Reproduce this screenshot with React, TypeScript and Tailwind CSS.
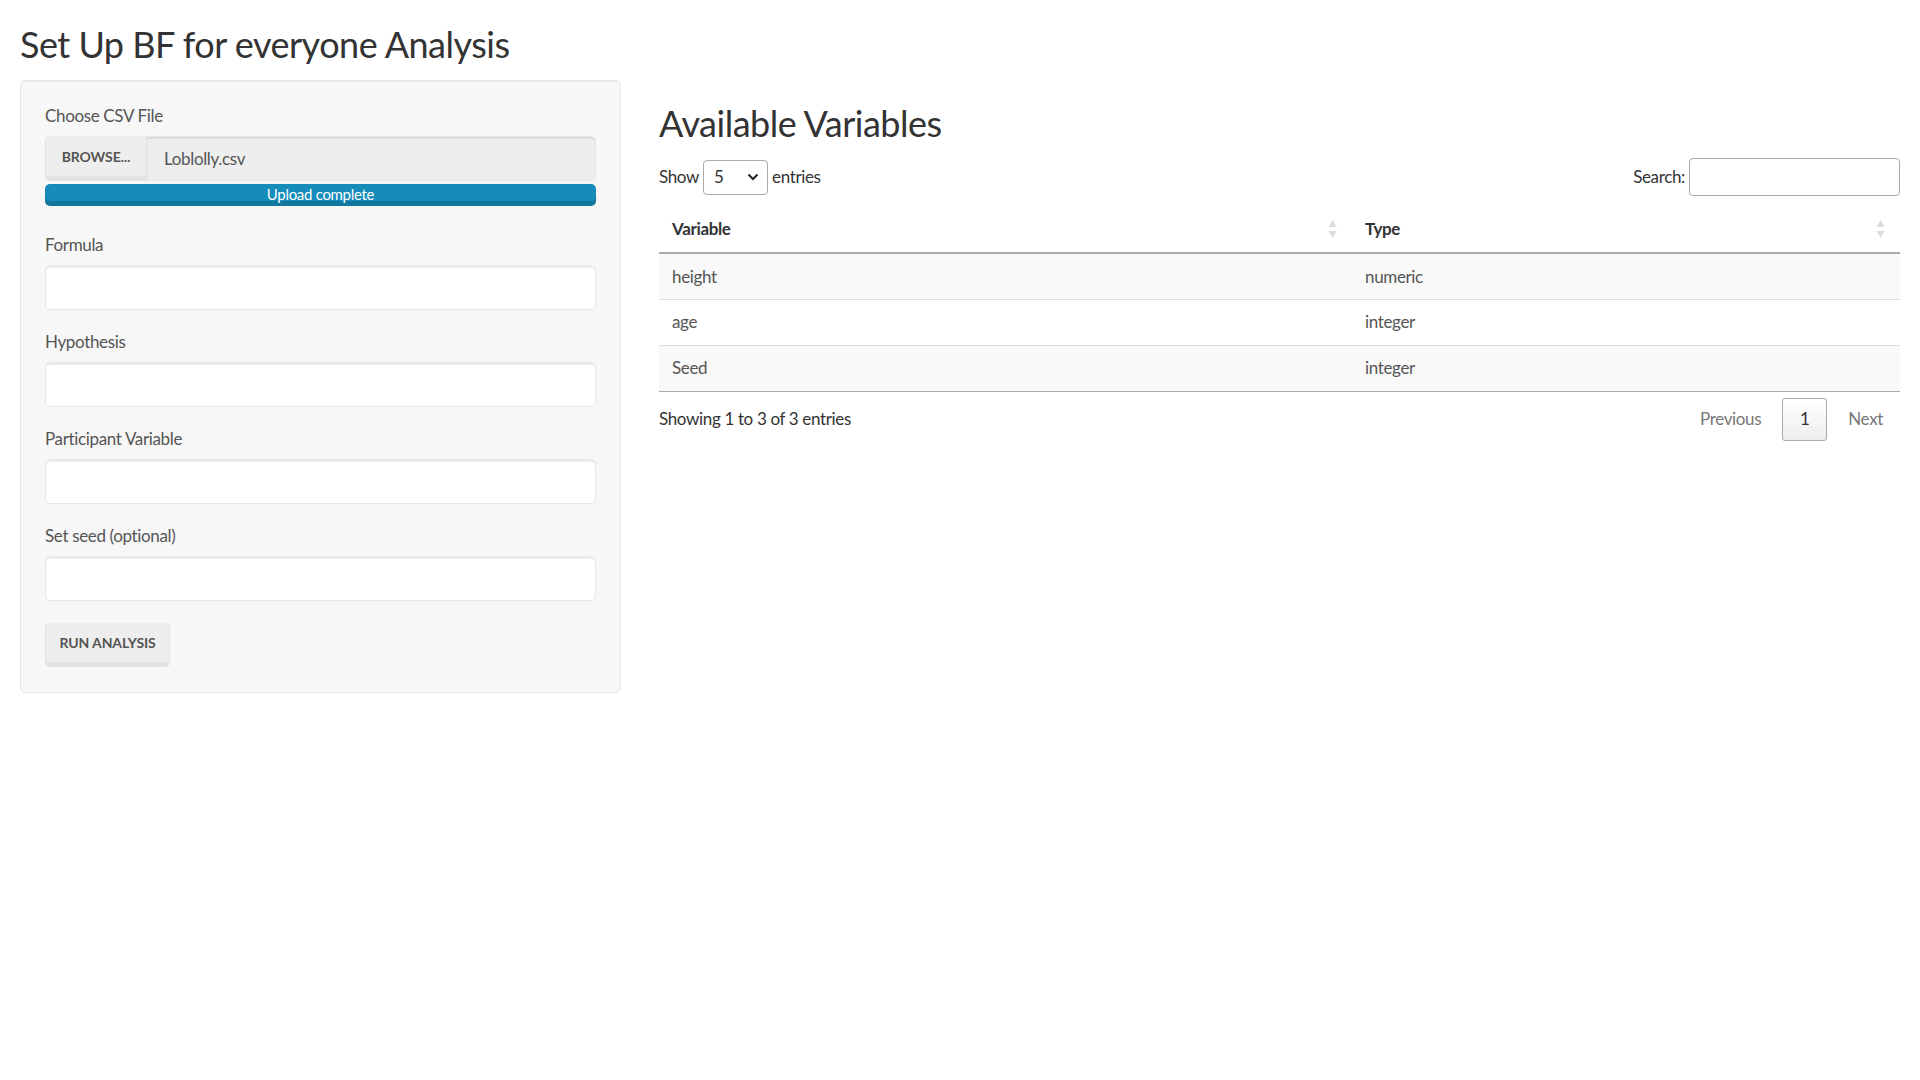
import React from "react";

const font = { fontFamily: "Lato, 'Noto Sans', sans-serif" };

function Field({ label }: { label: string }) {
  return (
    <div className="mb-[18px]">
      <div className="h-[27px] leading-[27px] mb-[7px] text-[17px] tracking-[-0.35px] text-[#555]">{label}</div>
      <div className="h-[45px] bg-white border border-[#e7e7e7] rounded-[5px] shadow-[inset_0_2px_0_rgba(0,0,0,0.075)]" />
    </div>
  );
}

function SortIcon() {
  return (
    <svg width="9" height="20" viewBox="0 0 9 20" className="shrink-0">
      <path d="M4.5 1 L8.5 8 L0.5 8 Z" fill="#dcdcdc" />
      <path d="M0.5 12 L8.5 12 L4.5 19 Z" fill="#dcdcdc" />
    </svg>
  );
}

const rows = [
  { name: "height", type: "numeric" },
  { name: "age", type: "integer" },
  { name: "Seed", type: "integer" },
];

export default function App() {
  return (
    <div className="min-h-screen w-full bg-white px-[20px] text-[#555]" style={font}>
      <h2 className="mt-[22px] mb-[14px] text-[36px] leading-[44px] tracking-[-0.5px] text-[#333] font-normal">
        Set Up BF for everyone Analysis
      </h2>

      <div className="flex items-start gap-[38px]">
        {/* sidebar well */}
        <div className="w-[601px] shrink-0 bg-[#f7f7f7] border border-[#e7e7e7] rounded-[5px] px-[24px] pt-[21px] pb-[25px] shadow-[inset_0_1px_1px_rgba(0,0,0,0.05)]">
          <div className="h-[27px] leading-[27px] mb-[7px] text-[17px] tracking-[-0.35px] text-[#555]">Choose CSV File</div>
          <div className="flex h-[45px]">
            <div className="w-[102px] shrink-0 flex items-center justify-center bg-[#eeeeee] border-x border-b-[5px] border-[#e2e2e2] rounded-l-[5px] text-[14px] font-bold uppercase text-[#555] tracking-[-0.1px]">
              Browse...
            </div>
            <div className="flex-1 flex items-center pl-[16px] bg-[#eeeeee] border border-[#e7e7e7] rounded-r-[5px] shadow-[inset_0_2px_0_rgba(0,0,0,0.075)] text-[17px] tracking-[-0.35px] text-[#555]">
              Loblolly.csv
            </div>
          </div>
          <div className="mt-[3px] mb-[25px] h-[22px] rounded-[5px] bg-[#158cba] shadow-[inset_0_-5px_0_rgba(0,0,0,0.15)] overflow-hidden flex justify-center">
            <span className="text-[15px] leading-[21px] tracking-[-0.3px] text-white">Upload complete</span>
          </div>

          <Field label="Formula" />
          <Field label="Hypothesis" />
          <Field label="Participant Variable" />
          <Field label="Set seed (optional)" />

          <button className="mt-[4px] h-[44px] w-[125px] bg-[#eeeeee] border-x border-b-[5px] border-[#e2e2e2] rounded-[5px] text-[14px] font-bold uppercase text-[#555] tracking-[-0.1px]">
            Run Analysis
          </button>
        </div>

        {/* main panel */}
        <div className="flex-1 min-w-0">
          <h2 className="mt-[21px] mb-[13px] text-[36px] leading-[44px] tracking-[-0.5px] text-[#333] font-normal">
            Available Variables
          </h2>

          <div className="flex items-center justify-between h-[38px] text-[17px] tracking-[-0.35px] text-[#333]">
            <div className="flex items-center">
              <span>Show</span>
              <div className="mx-[4px] w-[65px] h-[35px] border border-[#aaa] rounded-[4px] flex items-center justify-between pl-[10px] pr-[8px] bg-white">
                <span className="text-[17px]">5</span>
                <svg width="12" height="8" viewBox="0 0 12 8">
                  <path d="M1.5 1.5 L6 6 L10.5 1.5" stroke="#222" strokeWidth="2" fill="none" />
                </svg>
              </div>
              <span>entries</span>
            </div>
            <div className="flex items-center">
              <span className="mr-[4px]">Search:</span>
              <div className="w-[211px] h-[38px] border border-[#aaa] rounded-[4px] bg-white" />
            </div>
          </div>

          <table className="mt-[9px] w-full border-collapse text-[17px] tracking-[-0.35px]">
            <thead>
              <tr className="border-b-2 border-[#aaaaaa]">
                <th className="w-[694px] h-[48px] pl-[13px] pr-[16px] text-left font-bold text-[#333]">
                  <div className="flex items-center justify-between">
                    <span>Variable</span>
                    <SortIcon />
                  </div>
                </th>
                <th className="h-[48px] pl-[12px] pr-[15px] text-left font-bold text-[#333]">
                  <div className="flex items-center justify-between">
                    <span>Type</span>
                    <SortIcon />
                  </div>
                </th>
              </tr>
            </thead>
            <tbody>
              {rows.map((r, i) => (
                <tr
                  key={r.name}
                  className={`${i % 2 === 0 ? "bg-[#f9f9f9]" : "bg-white"} ${
                    i === rows.length - 1 ? "border-b border-[#aaaaaa]" : "border-b border-[#dddddd]"
                  }`}
                >
                  <td className="h-[46px] pl-[13px] text-[#555]">{r.name}</td>
                  <td className="h-[46px] pl-[12px] text-[#555]">{r.type}</td>
                </tr>
              ))}
            </tbody>
          </table>

          <div className="flex items-start justify-between mt-[6px] text-[17px] tracking-[-0.35px]">
            <div className="mt-[7px] h-[27px] leading-[27px] text-[#333]">Showing 1 to 3 of 3 entries</div>
            <div className="flex items-center">
              <div className="h-[43px] px-[17px] flex items-center text-[#777]">Previous</div>
              <div className="ml-[4px] h-[43px] w-[45px] flex items-center justify-center border border-[#aaa] rounded-[3px] bg-gradient-to-b from-white to-[#eeeeee] text-[#333]">
                1
              </div>
              <div className="ml-[4px] h-[43px] px-[17px] flex items-center text-[#777]">Next</div>
            </div>
          </div>
        </div>
      </div>
    </div>
  );
}
